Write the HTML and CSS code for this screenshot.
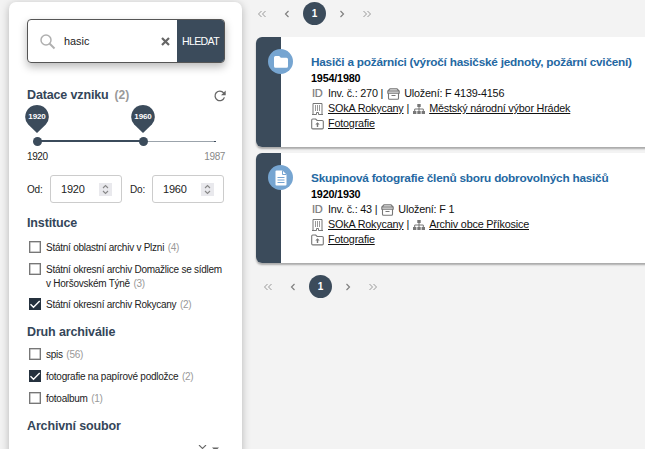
FILE: index.html
```html
<!DOCTYPE html>
<html lang="cs">
<head>
<meta charset="utf-8">
<title>Vyhledávání</title>
<link rel="stylesheet" href="styles.css">
</head>
<body>
<svg class="defs" width="0" height="0">
  <symbol id="box" viewBox="0 0 13 12"><path d="M3 .8h7L12.200 3v2.300H.8V3z" fill="#ddd"/><path d="M3 .8h7L12.200 3v2.300H.8V3zM1.500 5.300v5q0 1 1 1h8q1 0 1-1v-5M.8 3h11.400M4.500 7.500h4" fill="none" stroke="#777" stroke-width="1.100"/></symbol>
  <symbol id="building" viewBox="0 0 12 12"><path d="M1.500 11V.5h9V11M.5 11.500h4.500V9.500h2v2h4.500" fill="none" stroke="#777"/><path d="M4 2v6M6 2v6M8 2v6" stroke="#999"/></symbol>
  <symbol id="tree" viewBox="0 0 12 12"><path d="M4.300 1h3.400v3H4.300zM0 8h3.400v3H0zM4.300 8h3.400v3H4.300zM8.600 8H12v3H8.600z" fill="#777"/><path d="M6 4v4M1.700 8V6h8.600v2" fill="none" stroke="#777"/></symbol>
  <symbol id="upfolder" viewBox="0 0 13 12"><path d="M.7 2.100Q.7 1 1.800 1h2.900l1.400 1.500h5Q12.300 2.500 12.300 3.600v6.200q0 1.100-1.100 1.100H1.800Q.7 10.900.7 9.800z" fill="none" stroke="#777" stroke-width="1.100"/><path d="M6.500 4.200l2.200 2.400H7.200V9H5.800V6.600H4.300z" fill="#777"/></symbol>
  <symbol id="dleft" viewBox="0 0 10 8"><path d="M4.500 1l-3 3 3 3M8.500 1l-3 3 3 3" fill="none" stroke="#999"/></symbol>
  <symbol id="left" viewBox="0 0 6 8"><path d="M4.500 1l-3 3 3 3" fill="none" stroke="#808080" stroke-width="1.200"/></symbol>
  <symbol id="spin" viewBox="0 0 13 13"><path d="M4 5l2.500-2.500L9 5M4 8l2.500 2.500L9 8" fill="none" stroke="#888" stroke-width="1.100"/></symbol>
  <symbol id="pin" viewBox="0 0 24 28"><path d="M12 0a11.700 11.700 0 0 1 8.800 19.400L12 28 3.200 19.400A11.700 11.700 0 0 1 12 0z" fill="#3b4b5b"/></symbol>
  <symbol id="tick" viewBox="0 0 12 12"><path d="M1.500 6.200l3 3L10.700 3" fill="none" stroke="#fff" stroke-width="1.400"/></symbol>
</svg>
<div class="page">
  <aside class="panel">
    <div class="search">
      <svg class="lens" width="18" height="18" viewBox="0 0 18 18"><circle cx="7" cy="7" r="5" fill="none" stroke="#b0b0b0" stroke-width="1.500"/><path d="M10.500 10.500l5 5" stroke="#b0b0b0" stroke-width="2"/></svg>
      <span class="query">hasic</span>
      <svg class="clear" width="9" height="9" viewBox="0 0 9 9"><path d="M1 1l7 7M8 1L1 8" stroke="#666" stroke-width="2.200"/></svg>
      <span class="go">HLEDAT</span>
    </div>
    <h3 class="dating"><span>Datace vzniku</span><em>(2)</em>
      <svg width="12" height="12" viewBox="0 0 12 12"><path d="M10.400 7.400A4.800 4.800 0 1 1 9.600 2.900L11 4.400" fill="none" stroke="#666" stroke-width="1.300"/><path d="M11.700.5v4.700H7z" fill="#666"/></svg>
    </h3>
    <div class="slider">
      <div class="track"></div><div class="range"></div><i class="end"></i>
      <i class="knob from"></i><i class="knob to"></i>
      <div class="pin from"><svg width="24" height="28"><use href="#pin"/></svg><b>1920</b></div>
      <div class="pin to"><svg width="24" height="28"><use href="#pin"/></svg><b>1960</b></div>
    </div>
    <div class="limits"><span>1920</span><span class="max">1987</span></div>
    <div class="years">
      <span class="cap">Od:</span><div class="num"><span>1920</span><svg width="13" height="13"><use href="#spin"/></svg></div>
      <span class="cap second">Do:</span><div class="num"><span>1960</span><svg width="13" height="13"><use href="#spin"/></svg></div>
    </div>
    <h3 class="inst">Instituce</h3>
    <div class="opt"><i class="check"></i><p>Státní oblastní archiv v Plzni <em>(4)</em></p></div>
    <div class="opt tall"><i class="check"></i><p>Státní okresní archiv Domažlice se sídlem<br>v Horšovském Týně <em>(3)</em></p></div>
    <div class="opt"><i class="check on"><svg width="12" height="12"><use href="#tick"/></svg></i><p>Státní okresní archiv Rokycany <em>(2)</em></p></div>
    <h3 class="kind">Druh archiválie</h3>
    <div class="opt"><i class="check"></i><p>spis <em>(56)</em></p></div>
    <div class="opt"><i class="check on"><svg width="12" height="12"><use href="#tick"/></svg></i><p>fotografie na papírové podložce <em>(2)</em></p></div>
    <div class="opt"><i class="check"></i><p>fotoalbum <em>(1)</em></p></div>
    <h3 class="fund">Archivní soubor</h3>
    <div class="select"><svg width="22" height="8" viewBox="0 0 22 8"><path d="M1 0l7 7M8 0L1 7" stroke="#666" stroke-width="1.100"/><path d="M14 2.500h7l-3.500 3.500z" fill="#666"/></svg></div>
  </aside>
  <main class="results">
    <nav class="pager">
      <svg width="10" height="8"><use href="#dleft"/></svg><svg width="6" height="8"><use href="#left"/></svg>
      <b>1</b>
      <svg class="flip" width="6" height="8"><use href="#left"/></svg><svg class="flip" width="10" height="8"><use href="#dleft"/></svg>
    </nav>
    <article class="card">
      <div class="strip"><span class="badge"><svg width="16" height="14" viewBox="0 0 16 14"><path d="M1 2.500Q1 1 2.500 1h3.700l1.600 1.700h5.700q1.500 0 1.500 1.500v7q0 1.500-1.500 1.500h-11Q1 12.700 1 11.200z" fill="#fff"/></svg></span></div>
      <div class="info">
        <h2>Hasiči a požárníci (výročí hasičské jednoty, požární cvičení)</h2>
        <b class="date">1954/1980</b>
        <div class="line"><span class="id">ID</span><span>Inv. č.: 270 |</span><svg class="mid" width="13" height="12"><use href="#box"/></svg><span>Uložení: F 4139-4156</span></div>
        <div class="line"><svg class="lead" width="12" height="12"><use href="#building"/></svg><a>SOkA Rokycany</a><span class="bar">|</span><svg class="mid" width="12" height="12"><use href="#tree"/></svg><a>Městský národní výbor Hrádek</a></div>
        <div class="line"><svg class="lead" width="13" height="12"><use href="#upfolder"/></svg><a>Fotografie</a></div>
      </div>
    </article>
    <article class="card">
      <div class="strip"><span class="badge"><svg width="12" height="16" viewBox="0 0 12 16"><path d="M.5 1.500Q.5.500 1.500.500H7.500L11.500 4.500v10q0 1-1 1h-9q-1 0-1-1z" fill="#fff"/><path d="M7.500.500v4h4M2.500 7.500h7M2.500 10h7M2.500 12.500h7" fill="none" stroke="#76a5d1"/></svg></span></div>
      <div class="info">
        <h2>Skupinová fotografie členů sboru dobrovolných hasičů</h2>
        <b class="date">1920/1930</b>
        <div class="line"><span class="id">ID</span><span>Inv. č.: 43 |</span><svg class="mid" width="13" height="12"><use href="#box"/></svg><span>Uložení: F 1</span></div>
        <div class="line"><svg class="lead" width="12" height="12"><use href="#building"/></svg><a>SOkA Rokycany</a><span class="bar">|</span><svg class="mid" width="12" height="12"><use href="#tree"/></svg><a>Archiv obce Příkosice</a></div>
        <div class="line"><svg class="lead" width="13" height="12"><use href="#upfolder"/></svg><a>Fotografie</a></div>
      </div>
    </article>
    <nav class="pager bottom">
      <svg width="10" height="8"><use href="#dleft"/></svg><svg width="6" height="8"><use href="#left"/></svg>
      <b>1</b>
      <svg class="flip" width="6" height="8"><use href="#left"/></svg><svg class="flip" width="10" height="8"><use href="#dleft"/></svg>
    </nav>
  </main>
</div>
</body>
</html>
```
FILE: styles.css
```css
* { box-sizing: border-box; }
html, body { margin: 0; height: 449px; overflow: hidden; }
body { background: #f3f3f3; font-family: "Liberation Sans", Arial, sans-serif; color: #222; }
.defs { position: absolute; }
svg { display: block; flex: none; }
em { font-style: normal; color: #999; }
.page { display: flex; height: 449px; overflow: hidden; padding: 2px 0 0 9px; }
.panel { width: 233px; height: 520px; flex: none; padding: 17px 18px 0; background: #fff; border-radius: 7px; box-shadow: 0 2px 9px rgba(0,0,0,.26); }

.search { display: flex; align-items: center; height: 44px; width: 198px; border: 1px solid #555; border-radius: 4px; box-shadow: 0 4px 9px rgba(0,0,0,.27); overflow: hidden; font-size: 10.9px; }
.lens { margin-left: 11px; margin-top: 2px; }
.query { margin-left: 7px; width: 97px; }
.go { margin-left: 7px; align-self: stretch; flex: 1; background: #3b4b5b; color: #fff; display: flex; align-items: center; justify-content: center; font-size: 10.6px; letter-spacing: -.7px; }

h3 { margin: 0; height: 20px; line-height: 20px; font-size: 12.5px; letter-spacing: -.14px; color: #344659; white-space: nowrap; }
.dating { display: flex; align-items: center; margin-top: 22px; }
.dating em { margin-left: 6px; font-size: 12px; letter-spacing: 0; color: #999; }
.dating svg { margin-left: auto; margin-right: -2px; margin-top: 2px; }
.slider { position: relative; height: 43px; }
.track, .range { position: absolute; top: 36px; left: 10px; height: 1px; width: 178px; background: #9ba3ab; }
.range { width: 106px; background: #3b4b5b; height: 2px; top: 35px; }
.end { position: absolute; left: 187px; top: 36px; width: 2px; height: 1px; background: #3b4b5b; }
.knob { position: absolute; top: 32px; width: 9px; height: 9px; border-radius: 50%; background: #3b4b5b; }
.knob.from { left: 6px; }
.knob.to { left: 112px; }
.pin { position: absolute; top: 0; width: 24px; }
.pin.from { left: -2px; }
.pin.to { left: 104px; }
.pin b { position: absolute; inset: 5px 0 auto; text-align: center; color: #fff; font-size: 8px; letter-spacing: -.1px; line-height: 14px; }
.limits { display: flex; justify-content: space-between; height: 16px; line-height: 18px; font-size: 10px; letter-spacing: -.4px; width: 198px; }
.max { color: #888; }
.years { display: flex; align-items: center; margin-top: 11px; height: 28px; width: 198px; font-size: 10px; letter-spacing: -.2px; }
.cap { width: 23px; flex: none; }
.cap.second { margin-left: 8px; width: 22px; }
.num { display: flex; align-items: center; justify-content: space-between; width: 72px; flex: none; height: 28px; padding: 0 9px 0 10px; border: 1px solid #ccc; border-radius: 3px; font-size: 11px; }
.num svg { background: #e9e9ed; }

.inst { margin-top: 10px; margin-bottom: 4px; }
.kind { margin-top: 6px; margin-bottom: 2px; }
.fund { margin-top: 6px; }
.opt { display: flex; height: 22px; }
.opt.tall { height: 35px; }
.opt p { margin: 4px 0 0 5px; font-size: 10px; letter-spacing: -.25px; line-height: 14px; white-space: nowrap; }
.opt em { margin-left: 1px; }
.check { width: 12px; height: 12px; margin: 4px 0 0 2px; border: 1px solid #777; flex: none; box-shadow: inset 0 0 0 .5px #999; }
.check.on { background: #25313e; border: 0; box-shadow: none; }
.select { display: flex; justify-content: flex-end; padding: 9px 4px 0 0; }

.results { margin-left: 14px; flex: 1; min-width: 0; }
.pager { display: flex; align-items: center; height: 23px; padding-left: 1px; }
.pager svg + svg { margin-left: 17px; }
.pager b { width: 23px; height: 23px; margin: 0 13px; border-radius: 50%; background: #3b4b5b; color: #fff; font-size: 10px; line-height: 23px; text-align: center; }
.flip { transform: rotate(180deg); }
.card { display: flex; height: 110px; width: 480px; background: #fff; border-radius: 6px; box-shadow: 0 2px 2px rgba(0,0,0,.3); margin-top: 12px; }
.card + .card { margin-top: 6px; }
.strip { position: relative; width: 25px; background: #3b4b5b; border-radius: 6px 0 0 6px; }
.badge { position: absolute; left: 12px; top: 12px; width: 25px; height: 25px; border-radius: 50%; background: #76a5d1; display: flex; align-items: center; justify-content: center; }
.info { padding: 17px 0 0 30px; font-size: 10.8px; letter-spacing: -.19px; color: #111; white-space: nowrap; }
.info h2 { margin: 0; height: 17px; line-height: 17px; font-size: 11.8px; letter-spacing: -.23px; color: #2468a2; }
.date { display: block; height: 15px; line-height: 15px; color: #000; }
.line { display: flex; align-items: center; height: 15px; line-height: 13px; }
.id { width: 17px; padding-left: 1px; color: #777; font-size: 11px; -webkit-text-stroke: .2px #777; }
.line .lead { width: 13px; margin-right: 4px; }
.line .mid { margin: 0 4px; }
.line a { text-decoration: underline; text-underline-offset: 1px; }
.bar { margin-left: 3px; }
.pager.bottom { margin-top: 12px; padding-left: 7px; }
```
